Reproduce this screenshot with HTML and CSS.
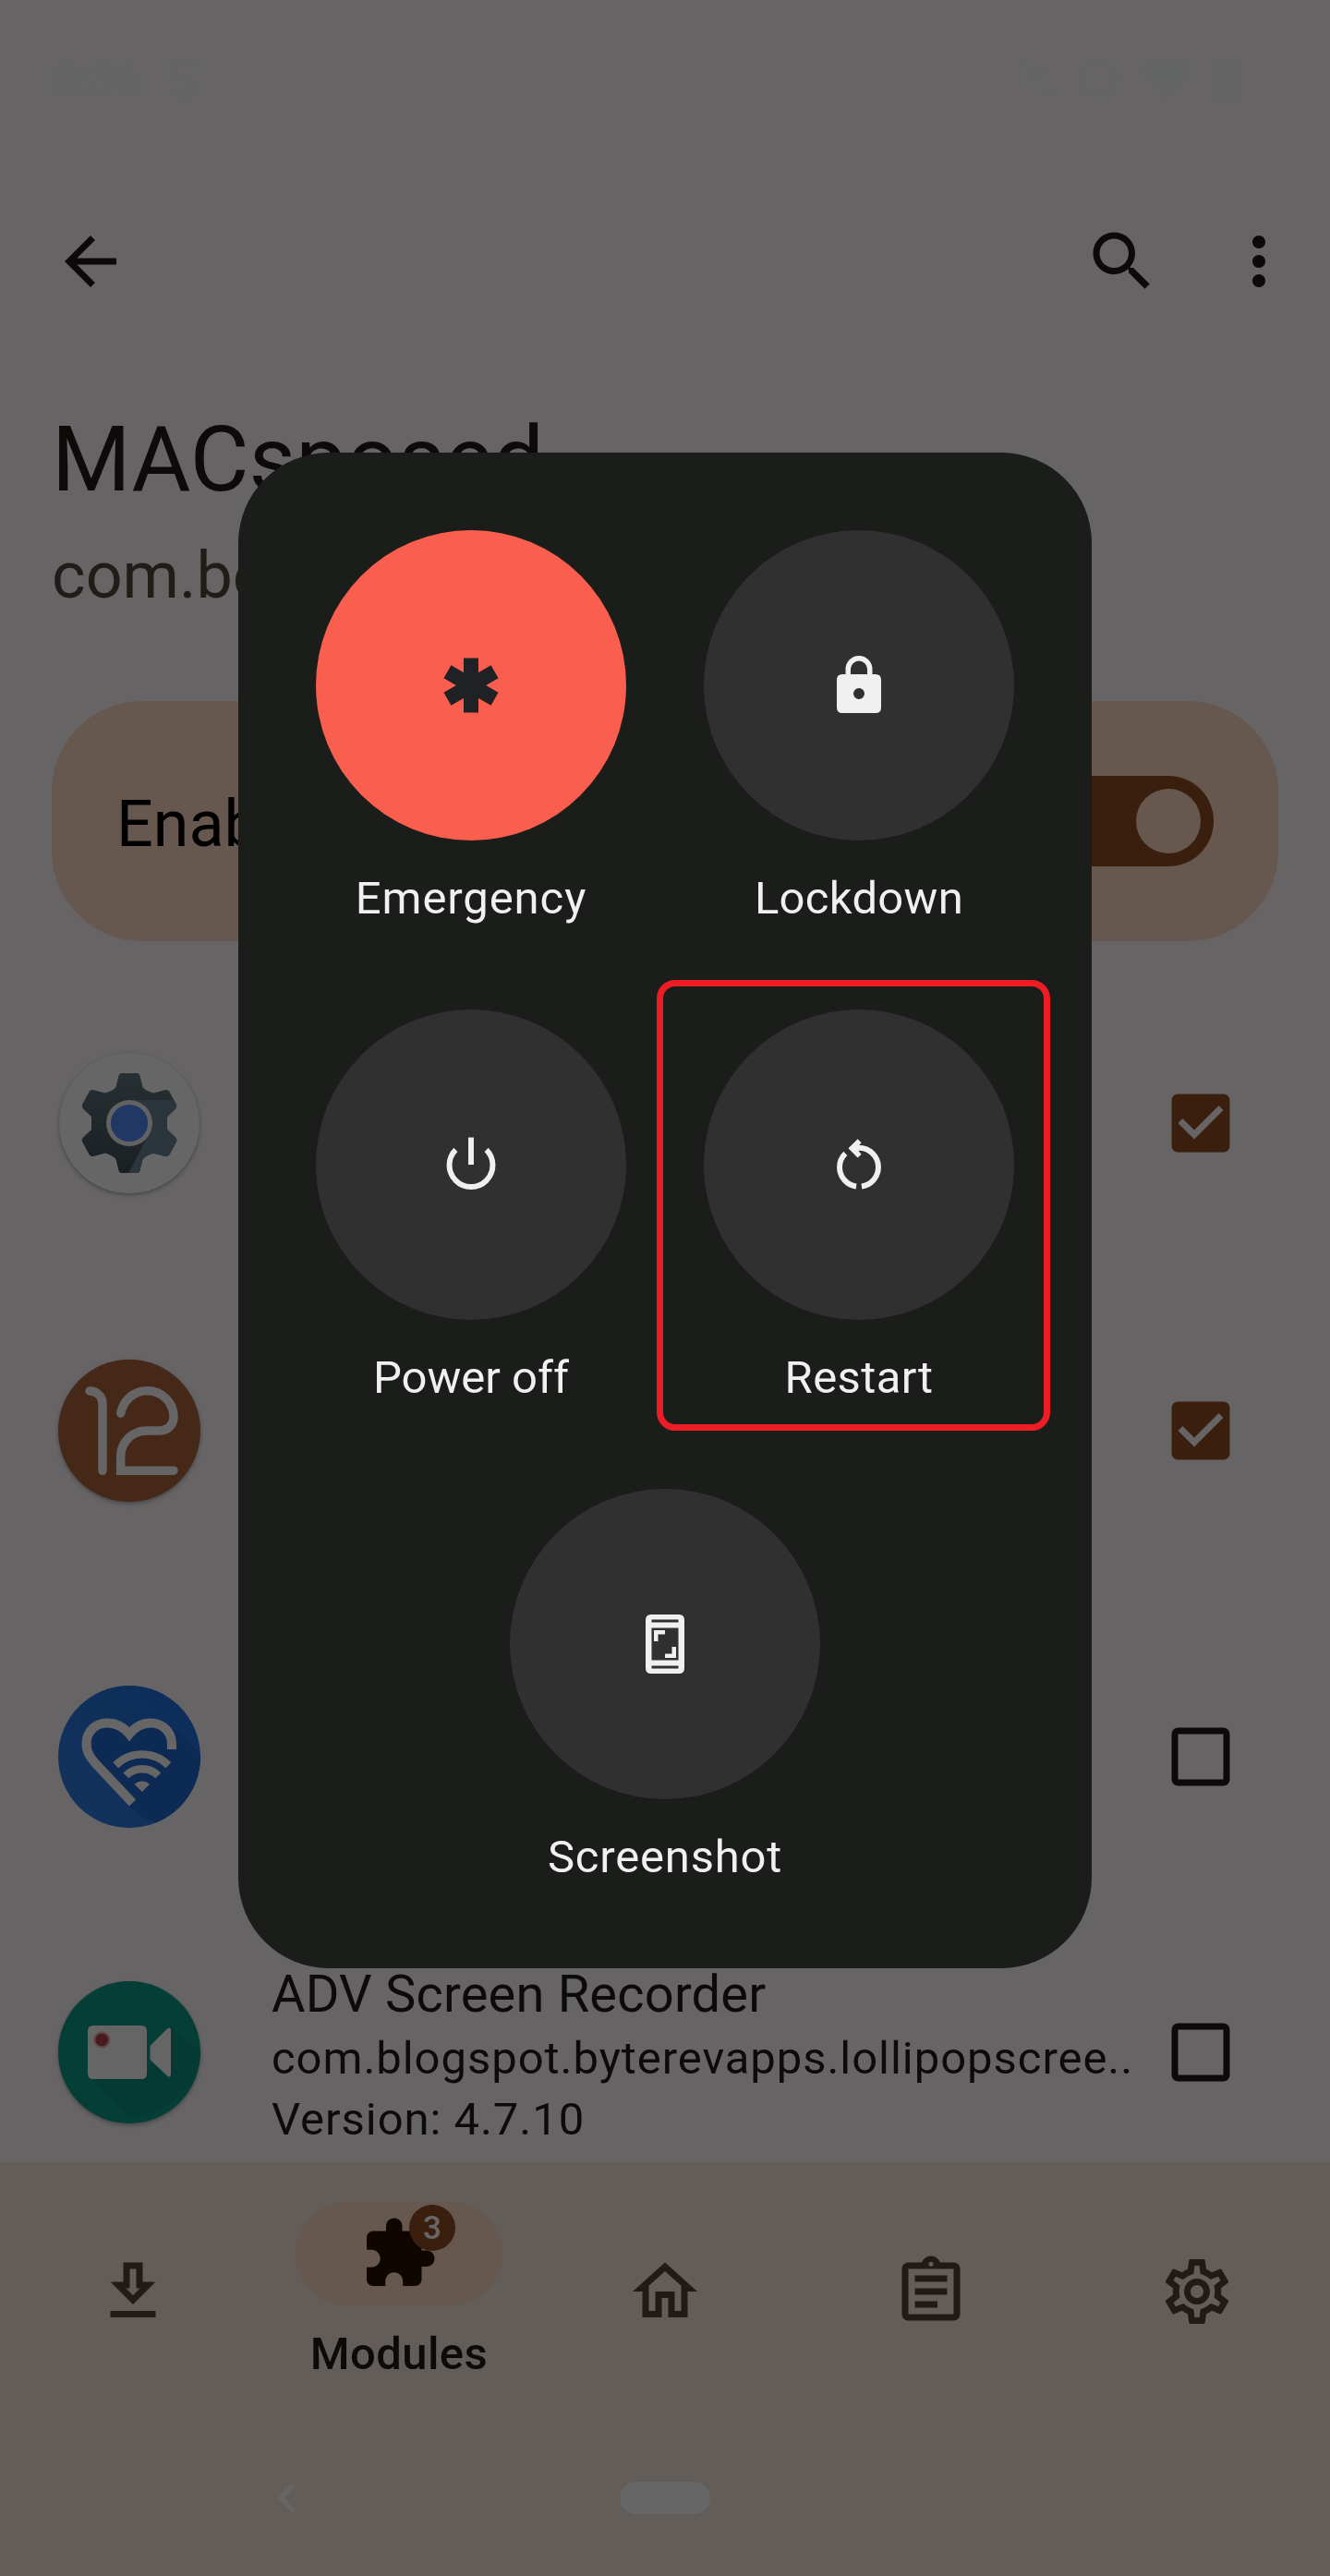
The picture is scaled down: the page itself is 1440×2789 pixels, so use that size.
FILE: index.html
```html
<!DOCTYPE html>
<html lang="en">
<head>
<meta charset="utf-8">
<title>Modules</title>
<link rel="stylesheet" href="styles.css">
</head>
<body>
<div class="screen">
  <header class="status">
    <span class="clock">8:36</span>
    <svg class="status-app" width="30" height="42" viewBox="0 0 30 42"><path d="M26 12V10A11 8 0 0 0 4 10C4 24 26 18 26 32A11 8 0 0 1 4 32V30"/></svg>
    <span class="grow"></span>
    <svg width="36" height="42" viewBox="0 0 36 42"><path d="M2 3L34 39M8 31V17C8 8 28 8 28 17V31H6"/></svg>
    <svg width="42" height="42" viewBox="0 0 42 42"><circle cx="21" cy="21" r="18"/><path d="M12 21H30"/></svg>
    <svg class="solid" width="52" height="42" viewBox="0 0 52 42"><path d="M26 42L0 10C15-3 37-3 52 10Z"/></svg>
    <svg class="solid" width="28" height="42" viewBox="0 0 28 42"><path d="M9 0H19V4H27V42H1V4H9Z"/></svg>
  </header>

  <div class="appbar">
    <svg class="icon" viewBox="0 0 24 24"><path d="M20 11H7.83l5.59-5.59L12 4l-8 8 8 8 1.41-1.41L7.83 13H20v-2z"/></svg>
    <span class="grow"></span>
    <svg class="icon" viewBox="0 0 24 24"><path d="M15.5 14h-.79l-.28-.27C15.41 12.59 16 11.11 16 9.5 16 5.91 13.09 3 9.5 3S3 5.91 3 9.5 5.91 16 9.5 16c1.61 0 3.09-.59 4.23-1.57l.27.28v.79l5 4.99L20.49 19l-4.99-5zm-6 0C7.01 14 5 11.99 5 9.5S7.01 5 9.5 5 14 7.01 14 9.5 11.99 14 9.5 14z"/></svg>
    <svg class="icon more" viewBox="0 0 24 24"><path d="M12 8c1.1 0 2-.9 2-2s-.9-2-2-2-2 .9-2 2 .9 2 2 2zm0 2c-1.1 0-2 .9-2 2s.9 2 2 2 2-.9 2-2-.9-2-2-2zm0 6c-1.1 0-2 .9-2 2s.9 2 2 2 2-.9 2-2-.9-2-2-2z"/></svg>
  </div>

  <div class="heading">
    <h1>MACsposed</h1>
    <p>com.berdik.macsposed</p>
  </div>

  <div class="enable">
    <span>Enable module</span>
    <div class="switch"><i></i></div>
  </div>

  <main class="list">
    <div class="row">
      <svg class="app" viewBox="-84 -84 168 168">
        <defs>
          <linearGradient id="steel" x1="0" y1="0" x2="0" y2="1"><stop offset="0" stop-color="#273033"/><stop offset="1" stop-color="#1a1f22"/></linearGradient>
          <clipPath id="cog"><path d="M-9-54H9Q11-54 11.600-51L14.500-39Q17-35.500 26-32.500L39-36Q42-36.500 43.500-34L51-20Q52-17.500 50-15.500L41-7V7L50 15.500Q52 17.500 51 20L43.500 34Q42 36.500 39 36L26 32.500Q17 35.500 14.500 39L11.600 51Q11 54 9 54H-9Q-11 54-11.600 51L-14.500 39Q-17 35.500-26 32.500L-39 36Q-42 36.500-43.500 34L-51 20Q-52 17.500-50 15.500L-41 7V-7L-50-15.500Q-52-17.500-51-20L-43.500-34Q-42-36.500-39-36L-26-32.500Q-17-35.500-14.500-39L-11.600-51Q-11-54-9-54Z"/></clipPath>
        </defs>
        <circle class="shade" r="76" cy="2"/>
        <circle r="76" fill="#666666"/>
        <g clip-path="url(#cog)"><rect x="-54" y="-54" width="108" height="108" fill="url(#steel)"/><path d="M0-25H60V60H-4L20 14Z" fill="#2a363c"/></g>
        <circle r="25" fill="#626262"/><circle r="20" fill="#203863"/>
      </svg>
      <span class="grow"></span>
      <svg class="icon checked" viewBox="0 0 24 24"><path d="M19 3H5c-1.110 0-2 .9-2 2v14c0 1.100.89 2 2 2h14c1.110 0 2-.9 2-2V5c0-1.100-.89-2-2-2zm-9 14l-5-5 1.410-1.410L10 14.170l7.590-7.590L19 8l-9 9z"/></svg>
    </div>
    <div class="row">
      <svg class="app" viewBox="-84 -84 168 168">
        <circle class="shade" r="77" cy="2"/>
        <circle r="77" fill="#452818"/>
        <g class="twelve"><path d="M-43-43C-35-43-29-37-29-29V43.300"/><path d="M-9.300-19C-6.500-33 5-43.300 19.300-43.300C35-43.300 48-31 48-15C48-6.500 41.500 0 33.300 0H18.300C3.500 0-9.300 12.500-9.300 27.700V43.200H48"/></g>
      </svg>
      <span class="grow"></span>
      <svg class="icon checked" viewBox="0 0 24 24"><path d="M19 3H5c-1.110 0-2 .9-2 2v14c0 1.100.89 2 2 2h14c1.110 0 2-.9 2-2V5c0-1.100-.89-2-2-2zm-9 14l-5-5 1.410-1.410L10 14.170l7.590-7.590L19 8l-9 9z"/></svg>
    </div>
    <div class="row tall">
      <svg class="app" viewBox="-84 -84 168 168">
        <defs><clipPath id="disc"><circle r="77"/></clipPath><linearGradient id="blue" x1="1" y1="0" x2="0" y2="1"><stop offset="0" stop-color="#0c2d5a"/><stop offset="1" stop-color="#13335c"/></linearGradient></defs>
        <circle r="77" fill="url(#blue)"/>
        <path d="M51-29L90 10L60 80L16 67L0 54L-40 5L-40-30L-20-36L0-20L25-36Z" fill="#0d2a54" clip-path="url(#disc)"/>
        <g class="heart"><path d="M3.500 50L-36 8C-42 1-46.500-5-46.500-14C-46.500-27-37-36.500-24-36.500C-14-36.500-6-32-0-24.500C6-32 14-36.500 23-36.500C36-36.500 46-27 46-14V-8"/><path class="arc" d="M-14.800 9.200A40.500 40.500 0 0 1 42.400 9.200M-3.600 20.400A24.600 24.600 0 0 1 31.200 20.400"/><path class="dot" d="M13.800 38L5.600 29.800A11.600 11.600 0 0 1 22 29.800Z"/></g>
      </svg>
      <span class="grow"></span>
      <svg class="icon" viewBox="0 0 24 24"><path d="M19 5v14H5V5h14m0-2H5c-1.100 0-2 .9-2 2v14c0 1.100.9 2 2 2h14c1.100 0 2-.9 2-2V5c0-1.100-.9-2-2-2z"/></svg>
    </div>
    <div class="row last">
      <svg class="app" viewBox="-84 -84 168 168">
        <circle class="shade" r="77" cy="2"/>
        <circle r="77" fill="#053e37"/>
        <path d="M-40 28L-1 69A77 77 0 0 0 77-1L45-28L15 29Z" fill="#043a33"/>
        <path d="M-39-29H13Q19-29 19-23V23Q19 29 13 29H-39Q-45 29-45 23V-23Q-45-29-39-29Z" fill="#666565"/>
        <path d="M22.500-7L41-25.500Q45-28 45-24V24Q45 28 41 25.500L22.500 8Z" fill="#666565"/>
        <circle cx="-29.700" cy="-13.500" r="9.300" fill="#624b4b"/><circle cx="-29.700" cy="-13.500" r="7" fill="#4a1b1d"/>
      </svg>
      <div class="info">
        <strong>ADV Screen Recorder</strong>
        <span class="pkg">com.blogspot.byterevapps.lollipopscree..</span>
        <span class="ver">Version: 4.7.10</span>
      </div>
      <svg class="icon" viewBox="0 0 24 24"><path d="M19 5v14H5V5h14m0-2H5c-1.100 0-2 .9-2 2v14c0 1.100.9 2 2 2h14c1.100 0 2-.9 2-2V5c0-1.100-.9-2-2-2z"/></svg>
    </div>
  </main>

  <footer class="bottom">
    <nav class="tabs">
      <div class="tab"><svg class="icon" viewBox="0 0 24 24"><path d="M19 9h-4V3H9v6H5l7 7 7-7zm-8 2V5h2v6h1.170L12 13.170 9.830 11H11zm-6 7h14v2H5z"/></svg></div>
      <div class="tab active">
        <div class="pill">
          <svg class="icon" viewBox="0 0 24 24"><path d="M20.500 11H19V7c0-1.100-.9-2-2-2h-4V3.500C13 2.120 11.880 1 10.500 1S8 2.120 8 3.500V5H4c-1.100 0-1.990.9-1.990 2v3.800H3.500c1.490 0 2.700 1.210 2.700 2.700s-1.210 2.700-2.700 2.700H2V20c0 1.100.9 2 2 2h3.800v-1.500c0-1.490 1.210-2.700 2.700-2.700 1.490 0 2.700 1.210 2.700 2.700V22H17c1.100 0 2-.9 2-2v-4h1.500c1.380 0 2.500-1.120 2.500-2.500S21.880 11 20.500 11z"/></svg>
          <span class="badge">3</span>
        </div>
        <span class="label">Modules</span>
      </div>
      <div class="tab"><svg class="icon" viewBox="0 0 24 24"><path d="M12 5.690l5 4.500V18h-2v-6H9v6H7v-7.810l5-4.500M12 3L2 12h3v8h6v-6h2v6h6v-8h3L12 3z"/></svg></div>
      <div class="tab"><svg class="icon" viewBox="0 0 24 24"><path d="M7 15h7v2H7zm0-4h10v2H7zm0-4h10v2H7zm12-4h-4.180C14.400 1.840 13.300 1 12 1c-1.300 0-2.400.84-2.820 2H5c-.14 0-.27.01-.4.04-.39.08-.74.28-1.010.55-.18.18-.33.4-.43.64-.1.23-.16.49-.16.77v14c0 .27.06.54.16.78s.25.45.43.64c.27.27.62.47 1.010.55.13.02.26.03.4.03h14c1.100 0 2-.9 2-2V5c0-1.100-.9-2-2-2zm-7-.25c.41 0 .75.34.75.75s-.34.75-.75.75-.75-.34-.75-.75.34-.75.75-.75zM19 19H5V5h14v14z"/></svg></div>
      <div class="tab"><svg class="icon" viewBox="0 0 24 24"><path d="M19.430 12.980c.04-.32.07-.64.07-.98 0-.34-.03-.66-.07-.98l2.110-1.650c.19-.15.24-.42.12-.64l-2-3.460c-.09-.16-.26-.25-.44-.25-.06 0-.12.01-.17.03l-2.490 1c-.52-.4-1.080-.73-1.690-.98l-.38-2.650C14.460 2.180 14.250 2 14 2h-4c-.25 0-.46.18-.49.42l-.38 2.650c-.61.25-1.170.59-1.690.98l-2.490-1c-.06-.02-.12-.03-.18-.03-.17 0-.34.09-.43.25l-2 3.460c-.13.22-.07.49.12.64l2.110 1.650c-.04.32-.07.65-.07.98 0 .33.03.66.07.98l-2.110 1.650c-.19.15-.24.42-.12.64l2 3.460c.09.16.26.25.44.25.06 0 .12-.01.17-.03l2.490-1c.52.4 1.080.73 1.690.98l.38 2.650c.03.24.24.42.49.42h4c.25 0 .46-.18.49-.42l.38-2.650c.61-.25 1.170-.59 1.690-.98l2.490 1c.06.02.12.03.18.03.17 0 .34-.09.43-.25l2-3.460c.12-.22.07-.49-.12-.64l-2.110-1.650zm-1.980-1.710c.04.31.05.52.05.73 0 .21-.02.43-.05.73l-.14 1.130.89.7 1.080.84-.7 1.210-1.270-.51-1.040-.42-.9.68c-.43.32-.84.56-1.250.73l-1.060.43-.16 1.130-.2 1.350h-1.400l-.19-1.350-.16-1.130-1.060-.43c-.43-.18-.83-.41-1.230-.71l-.91-.7-1.060.43-1.270.51-.7-1.210 1.080-.84.89-.7-.14-1.130c-.03-.31-.05-.54-.05-.74s.02-.43.05-.73l.14-1.130-.89-.7-1.080-.84.7-1.210 1.270.51 1.040.42.9-.68c.43-.32.84-.56 1.250-.73l1.060-.43.16-1.130.2-1.350h1.390l.19 1.350.16 1.130 1.060.43c.43.18.83.41 1.230.71l.91.7 1.060-.43 1.270-.51.7 1.210-1.070.85-.89.7.14 1.130zM12 8c-2.210 0-4 1.790-4 4s1.790 4 4 4 4-1.790 4-4-1.790-4-4-4zm0 6c-1.100 0-2-.9-2-2s.9-2 2-2 2 .9 2 2-.9 2-2 2z"/></svg></div>
    </nav>
    <div class="sysnav">
      <svg width="24" height="35" viewBox="0 0 24 35"><path d="M19.500 2.500L5 17.500L19.500 32.500"/></svg>
      <i></i>
      <span></span>
    </div>
  </footer>

  <section class="power-menu">
    <div class="action emergency">
      <div class="circle"><svg viewBox="-42 -42 84 84"><path d="M-8-29.500H8V29.500H-8Z"/><path d="M-8-29.500H8V29.500H-8Z" transform="rotate(60)"/><path d="M-8-29.500H8V29.500H-8Z" transform="rotate(-60)"/></svg></div>
      <span class="t-emergency">Emergency</span>
    </div>
    <div class="action">
      <div class="circle"><svg viewBox="-42 -42 84 84"><path fill-rule="evenodd" d="M-14.500-12V-17.500A14.500 14.500 0 0 1 14.500-17.500V-12H18Q24-12 24-6V24Q24 30 18 30H-18Q-24 30-24 24V-6Q-24-12-18-12ZM-9-12H9V-17.500A9 9 0 0 0-9-17.500ZM-6 9A6 6 0 0 0 6 9A6 6 0 0 0-6 9Z"/></svg></div>
      <span class="t-lockdown">Lockdown</span>
    </div>
    <div class="action">
      <div class="circle"><svg class="line" viewBox="-42 -42 84 84"><path d="M0-29.500V0M-16.600-16.200A23.500 23.500 0 1 0 16.600-16.200"/></svg></div>
      <span class="t-power">Power off</span>
    </div>
    <div class="action highlighted">
      <div class="circle"><svg viewBox="-42 -42 84 84"><path class="ring" d="M-2.900 23.500A21 21 0 0 1-21 2.700A21 21 0 0 1-14.700-12.200M2.900 23.500A21 21 0 0 0 21 2.700A21 21 0 0 0 0-18.300H-4"/><path d="M-11.500-17.700L-1.400-27.800L2.600-23.800L-.2-20.800V-14.500L2.600-11.200L-1.400-7.500Z"/></svg></div>
      <span class="t-restart">Restart</span>
    </div>
    <div class="action wide">
      <div class="circle"><svg viewBox="-42 -42 84 84"><path fill-rule="evenodd" d="M-15-32H15Q21-32 21-26V26Q21 32 15 32H-15Q-21 32-21 26V-26Q-21-32-15-32ZM-14.500-26.500V-23.500H14.500V-26.500ZM-14.500-17.500V17.500H14.500V-17.500ZM-14.500 23.500V26.500H14.500V23.500Z"/><path d="M-12-15H0V-10.500H-7.500V-3H-12ZM12 15H0V10.500H7.500V3H12Z"/></svg></div>
      <span class="t-screenshot">Screenshot</span>
    </div>
  </section>
</div>
</body>
</html>
```
FILE: styles.css
```css
*, *::after { box-sizing: border-box; }
body { margin: 0; font-family: Roboto, sans-serif; }
svg, i { display: block; flex: none; }
h1, p { margin: 0; font-weight: 400; }

.screen {
  position: relative;
  display: flex;
  flex-direction: column;
  width: 1440px;
  height: 2789px;
  overflow: hidden;
  background: #666465;
}
.grow { flex: 1; }
.icon { width: 84px; height: 84px; fill: #0c0a09; }

.status {
  display: flex;
  align-items: center;
  gap: 26px;
  height: 170px;
  padding: 0 98px 0 57px;
  color: #646564;
}
.clock { width: 101px; font-size: 48px; font-weight: 500; letter-spacing: -0.5px; }
.status svg { fill: none; stroke: #646564; stroke-width: 4; }
.status svg.solid { fill: #636564; stroke: none; }

.appbar {
  display: flex;
  align-items: center;
  height: 226px;
  padding: 0 35px 0 56px;
}
.appbar .more { margin-left: 64px; }

.heading { height: 363px; padding: 44px 56px 0; }
h1 { font-size: 98px; line-height: 115px; color: #0d0a09; }
.heading p { margin-top: 27px; font-size: 70px; line-height: 82px; color: #211c17; }

.enable {
  display: flex;
  align-items: center;
  justify-content: space-between;
  height: 260px;
  margin: 0 56px 30px;
  padding: 0 70px;
  border-radius: 98px;
  background: #66584e;
  font-size: 70px;
  color: #000;
}
.enable span { padding-top: 6px; }
.switch {
  display: flex;
  justify-content: flex-end;
  width: 182px;
  height: 98px;
  padding: 14px;
  border-radius: 49px;
  background: #3a1e0e;
}
.switch i { width: 70px; height: 70px; border-radius: 50%; background: #66584e; }

.list { flex: 1; min-height: 0; overflow: hidden; }
.row { display: flex; align-items: center; height: 333px; padding: 0 98px 0 56px; }
.row.tall { height: 373px; }
.row.last { height: 267px; }
.row .checked { fill: #3a1e0e; }
.app { width: 168px; height: 168px; overflow: visible; }
.shade { fill: #474545; filter: blur(2px); }
.twelve { fill: none; stroke: #656565; stroke-width: 9.5; stroke-linecap: round; }
.heart { fill: none; stroke: #666; stroke-width: 10; }
.heart .arc { stroke-width: 8.4; }
.heart .dot { fill: #666; stroke: none; }

.info {
  display: flex;
  flex: 1;
  flex-direction: column;
  gap: 8px;
  min-width: 0;
  padding: 6px 0 0 70px;
  font-size: 49px;
  line-height: 58px;
  white-space: nowrap;
  color: #0d0b0a;
}
.info strong { font-size: 56px; font-weight: 400; line-height: 66px; letter-spacing: 0.2px; }
.info .pkg, .info .ver { letter-spacing: 0.95px; }

.bottom { height: 448px; background: #625d59; }
.tabs { display: grid; grid-template-columns: repeat(5, 1fr); height: 280px; }
.tab { display: flex; flex-direction: column; align-items: center; justify-content: center; }
.tab .icon { fill: #201b17; }
.pill {
  position: relative;
  display: flex;
  align-items: center;
  justify-content: center;
  width: 224px;
  height: 112px;
  border-radius: 56px;
  background: #66584e;
}
.pill .icon { fill: #100600; }
.badge {
  position: absolute;
  left: 123px;
  top: 3px;
  width: 50px;
  height: 50px;
  border-radius: 50%;
  background: #3a1e0e;
  color: #666;
  font-size: 35px;
  font-weight: 500;
  line-height: 51px;
  text-align: center;
}
.label {
  margin-top: 24px;
  font-size: 49px;
  font-weight: 500;
  line-height: 58px;
  letter-spacing: 0.4px;
  color: #0e0a09;
}

.sysnav {
  display: grid;
  grid-template-columns: 1fr 98px 1fr;
  padding-top: 66px;
}
.sysnav svg { margin-left: 299px; fill: none; stroke: #656665; stroke-width: 5; }
.sysnav i { height: 35px; border-radius: 18px; background: #666666; }

.power-menu {
  position: absolute;
  left: 258px;
  top: 490px;
  display: grid;
  grid-template-columns: 336px 336px;
  grid-auto-rows: 519px;
  column-gap: 84px;
  width: 924px;
  height: 1641px;
  padding: 84px 84px 0;
  border-radius: 98px;
  background: #1b1d1a;
  color: #f0f0f0;
}
.action {
  position: relative;
  display: flex;
  flex-direction: column;
  align-items: center;
  font-size: 49px;
  line-height: 58px;
  white-space: nowrap;
}
.wide { grid-column: 1 / -1; }
.t-emergency { letter-spacing: 0.9px; }
.t-lockdown { letter-spacing: 0.3px; }
.t-restart { letter-spacing: 0.4px; }
.t-screenshot { letter-spacing: 0.8px; }
.circle {
  display: flex;
  align-items: center;
  justify-content: center;
  width: 336px;
  height: 336px;
  margin-bottom: 34px;
  border-radius: 50%;
  background: #303030;
}
.circle svg { width: 84px; height: 84px; fill: #f0f0f0; }
.circle svg.line, .circle .ring { fill: none; stroke: #f0f0f0; stroke-width: 5.9; }
.emergency .circle { background: #fa5e4e; }
.emergency .circle svg { fill: #1f2124; }
.highlighted::after {
  content: "";
  position: absolute;
  left: -51px;
  top: -32px;
  width: 426px;
  height: 488px;
  border: 7px solid #ee1c25;
  border-radius: 20px;
}
```
